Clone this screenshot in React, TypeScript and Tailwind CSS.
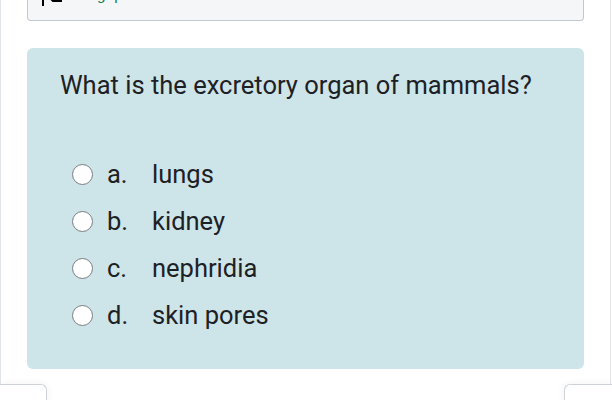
import React from 'react'

const options = [
  { key: 'a.', label: 'lungs' },
  { key: 'b.', label: 'kidney' },
  { key: 'c.', label: 'nephridia' },
  { key: 'd.', label: 'skin pores' },
]

function FlagIcon() {
  return (
    <svg width="22" height="22" viewBox="0 0 22 22" fill="none" stroke="#000" strokeWidth="2" aria-hidden="true">
      <path d="M2 1v21" />
      <path d="M2 3h8l2 2h8v12h-8l-2-2H2" />
    </svg>
  )
}

export default function App() {
  return (
    <div className="w-[612px] h-[400px] overflow-hidden bg-white font-['Roboto',sans-serif] text-[#1d2125]">
      <div className="w-[611px] border-x border-[#e1e4e8] px-[26px] pb-[15px]">
        <div className="-mt-[40px] h-[61px] flex items-end rounded-b-[4px] border border-t-0 border-[#c3c8cf] bg-[#f5f6f8] px-[13px] pb-[14px]">
          <div className="flex items-center gap-[14px]">
            <FlagIcon />
            <span className="text-[15px] leading-[22px] text-[#12804a]">Flag question</span>
          </div>
        </div>
        <div className="mt-[27px] h-[321px] rounded-[6px] bg-[#cde5e9] pl-[33px] pt-[20px]">
          <p className="text-[25.5px] leading-[34px]">What is the excretory organ of mammals?</p>
          <div className="mt-[58px] flex flex-col gap-[19px]">
            {options.map((o) => (
              <label key={o.key} className="flex items-center h-[28px] pl-[12px]">
                <span className="w-[21px] h-[21px] rounded-full border-[1.5px] border-[#7a7d80] bg-white" />
                <span className="ml-[14px] w-[45px] text-[25.5px] leading-[28px]">{o.key}</span>
                <span className="text-[25.5px] leading-[28px]">{o.label}</span>
              </label>
            ))}
          </div>
        </div>
      </div>
      <div className="flex justify-between">
        <div className="w-[47px] h-[30px] rounded-tr-[6px] border-t border-r border-[#cfd3d8] bg-white shadow-[0_0_8px_rgba(0,0,0,0.06)]" />
        <div className="w-[48px] h-[30px] rounded-tl-[6px] border-t border-l border-[#cfd3d8] bg-white shadow-[0_0_8px_rgba(0,0,0,0.06)]" />
      </div>
    </div>
  )
}
